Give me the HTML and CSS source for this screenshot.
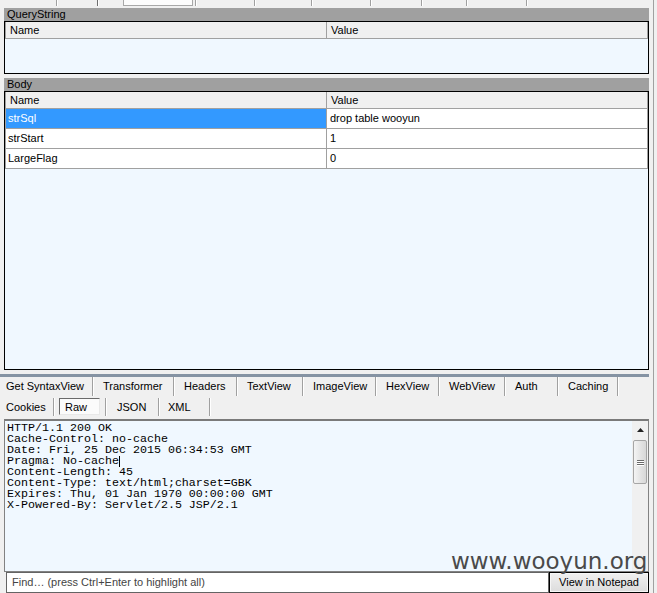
FILE: index.html
```html
<!DOCTYPE html>
<html>
<head>
<meta charset="utf-8">
<link rel="stylesheet" href="styles.css">
</head>
<body>
<div class="app">
  <div class="main">
    <div class="strip">
      <span class="st st1"></span>
      <span class="st st2"></span>
      <span class="st st3"><span class="sel-box"></span></span>
      <span class="st st4"></span>
      <span class="st st5"></span>
      <span class="st st6"></span>
      <span class="st st7"></span>
      <span class="st st8"></span>
      <span class="st st9"></span>
    </div>

    <section class="group qs">
      <div class="title">QueryString</div>
      <div class="grid">
        <div class="row head"><div class="cell">Name</div><div class="cell">Value</div></div>
      </div>
    </section>

    <section class="group body">
      <div class="title">Body</div>
      <div class="grid">
        <div class="row head"><div class="cell">Name</div><div class="cell">Value</div></div>
        <div class="row data"><div class="cell sel">strSql</div><div class="cell">drop table wooyun</div></div>
        <div class="row data"><div class="cell">strStart</div><div class="cell">1</div></div>
        <div class="row data"><div class="cell">LargeFlag</div><div class="cell">0</div></div>
      </div>
    </section>

    <div class="splitter"></div>

    <div class="tabs row1">
      <div class="tab w1 first">Get SyntaxView</div>
      <div class="tab w2">Transformer</div>
      <div class="tab w3">Headers</div>
      <div class="tab w4">TextView</div>
      <div class="tab w5">ImageView</div>
      <div class="tab w6">HexView</div>
      <div class="tab w7">WebView</div>
      <div class="tab w8">Auth</div>
      <div class="tab w9">Caching</div>
    </div>
    <div class="tabs row2">
      <div class="tab c1 first">Cookies</div>
      <div class="tab c2"><span class="raw-sel">Raw</span></div>
      <div class="tab c3">JSON</div>
      <div class="tab c4">XML</div>
    </div>

    <div class="raw">
<pre class="raw-text">HTTP/1.1 200 OK
Cache-Control: no-cache
Date: Fri, 25 Dec 2015 06:34:53 GMT
Pragma: No-cache<span class="caret"></span>
Content-Length: 45
Content-Type: text/html;charset=GBK
Expires: Thu, 01 Jan 1970 00:00:00 GMT
X-Powered-By: Servlet/2.5 JSP/2.1</pre>
      <div class="vscroll">
        <div class="arrow-up"><svg width="7" height="4" viewBox="0 0 7 4"><path d="M0 4 L3.5 0 L7 4 Z" fill="#222"/></svg></div>
        <div class="thumb"><span></span><span></span><span></span></div>
      </div>
    </div>

    <div class="findbar">
      <div class="find">Find… (press Ctrl+Enter to highlight all)</div>
      <button class="btn">View in Notepad</button>
    </div>
  </div>
  <div class="edge"></div>
  <div class="watermark">www.wooyun.org</div>
</div>
</body>
</html>
```

FILE: styles.css
```css
* { box-sizing: border-box; }
html, body { margin: 0; padding: 0; }
body {
  width: 657px;
  height: 593px;
  overflow: hidden;
  background: #f0f0f0;
  font-family: "Liberation Sans", Arial, sans-serif;
  font-size: 11px;
  color: #000;
}
.app { position: relative; display: flex; height: 593px; }
.main { width: 649px; display: flex; flex-direction: column; flex: none; }
.edge { width: 5px; flex: none; border-right: 1px solid #a0a0a0; }

/* top strip */
.strip { display: flex; height: 8px; align-items: flex-start; }
.st { height: 6px; flex: none; border-right: 1px solid #a0a0a0; box-shadow: 1px 0 0 #fff; }
.st1 { width: 57px; }
.st2 { width: 41px; border-right: 1px solid #6e6e6e; }
.st3 { width: 98px; display: flex; }
.sel-box { margin-left: 25px; width: 70px; height: 6px; border: 1px solid #a8a8a8; border-top: 0; background: #fcfcfc; }
.st4 { width: 59px; }
.st5 { width: 57px; }
.st6 { width: 59px; }
.st7 { width: 51px; }
.st8 { width: 45px; }
.st9 { width: 60px; }

/* groups */
.group { margin-left: 4px; width: 645px; display: flex; flex-direction: column; flex: none; }
.group.body { margin-top: 4px; }
.title { height: 13px; line-height: 13px; background: #a0a0a0; padding-left: 3px; }
.grid { border: 1px solid #000; background: #f0f8ff; display: flex; flex-direction: column; }
.qs .grid { height: 53px; }
.body .grid { height: 279px; }
.row { display: grid; grid-template-columns: 322px 321px; height: 20px; border-bottom: 1px solid #a0a0a0; flex: none; }
.row.head { height: 17px; background: #f0f0f0; }
.cell { border-right: 1px solid #a0a0a0; padding-left: 3px; line-height: 19px; white-space: nowrap; }
.cell:first-child { border-left: 1px solid #a0a0a0; padding-left: 2px; }
.head .cell { line-height: 16px; padding-left: 4px; }
.row.data { background: #fff; }
.cell.sel { background: #3399ff; color: #fff; }

/* splitter + tabs */
.splitter { height: 3px; margin-top: 4px; background: #8593a3; flex: none; }
.tabs { display: flex; height: 20px; flex: none; }
.tab {
  flex: none;
  height: 19px;
  line-height: 18px;
  padding-left: 10px;
  white-space: nowrap;
  border-right: 1px solid #a0a0a0;
  box-shadow: 1px 0 0 #fff;
}
.row2 .tab { margin-top: 1px; height: 18px; line-height: 19px; }
.tab.first { padding-left: 6px; }
.w1 { width: 93px; }
.w2 { width: 81px; }
.w3 { width: 63px; }
.w4 { width: 66px; }
.w5 { width: 73px; }
.w6 { width: 63px; }
.w7 { width: 66px; }
.w8 { width: 53px; }
.w9 { width: 60px; }
.c1 { width: 54px; }
.c2 { width: 52px; padding-left: 5px; }
.c3 { width: 53px; padding-left: 11px; }
.c4 { width: 51px; padding-left: 9px; }
.raw-sel {
  display: block;
  width: 41px;
  height: 17px;
  line-height: 17px;
  padding-left: 5px;
  border-top: 1px solid #6a6a6a;
  border-left: 1px solid #6a6a6a;
  border-right: 1px solid #e8e8e8;
  border-bottom: 1px solid #e8e8e8;
  background: #fbfbfb;
}

/* raw text area */
.raw {
  margin-left: 4px;
  margin-top: 2px;
  width: 645px;
  height: 153px;
  flex: none;
  border: 1px solid #828282;
  border-top: 2px solid #7a7a7a;
  background: #f0f8ff;
  display: flex;
}
.raw-text {
  flex: 1;
  margin: 0;
  padding: 2px 0 0 2px;
  font-family: "Liberation Mono", "Courier New", monospace;
  font-size: 11.67px;
  line-height: 11px;
  color: #000;
  white-space: pre;
  overflow: hidden;
}
.caret { display: inline-block; width: 1px; height: 11px; background: #000; vertical-align: top; }
.vscroll { width: 16px; flex: none; background: #f0f0f0; display: flex; flex-direction: column; align-items: center; }
.arrow-up { height: 18px; display: flex; align-items: center; justify-content: center; }
.arrow-up svg { display: block; }
.thumb {
  margin-top: 1px;
  width: 14px;
  height: 44px;
  border: 1px solid #a6a6a6;
  border-radius: 2px;
  background: linear-gradient(to right, #f4f4f4, #e2e2e2 60%, #d8d8d8);
  display: flex;
  flex-direction: column;
  align-items: center;
  justify-content: center;
  gap: 1px;
}
.thumb span { display: block; width: 7px; height: 1px; background: #6a6a6a; box-shadow: 0 1px 0 #fff; }

/* find bar */
.findbar { display: flex; height: 21px; flex: none; }
.find {
  margin-left: 6px;
  width: 543px;
  height: 21px;
  border: 1px solid #646464;
  background: #fff;
  color: #444;
  padding-left: 5px;
  line-height: 19px;
  white-space: nowrap;
}
.btn {
  width: 100px;
  height: 21px;
  margin: 0;
  padding: 0;
  border: 1px solid #000;
  box-shadow: inset 0 0 0 1px #f6f6f6;
  background: linear-gradient(#f0f0f0, #dcdcdc);
  font-family: "Liberation Sans", Arial, sans-serif;
  font-size: 11px;
  color: #000;
  text-align: center;
  line-height: 19px;
}

.watermark {
  position: absolute;
  left: 451px;
  top: 550px;
  font-family: "DejaVu Sans", Verdana, sans-serif;
  font-size: 23px;
  line-height: 23px;
  color: #4a4a4a;
  white-space: nowrap;
  pointer-events: none;
}
```
